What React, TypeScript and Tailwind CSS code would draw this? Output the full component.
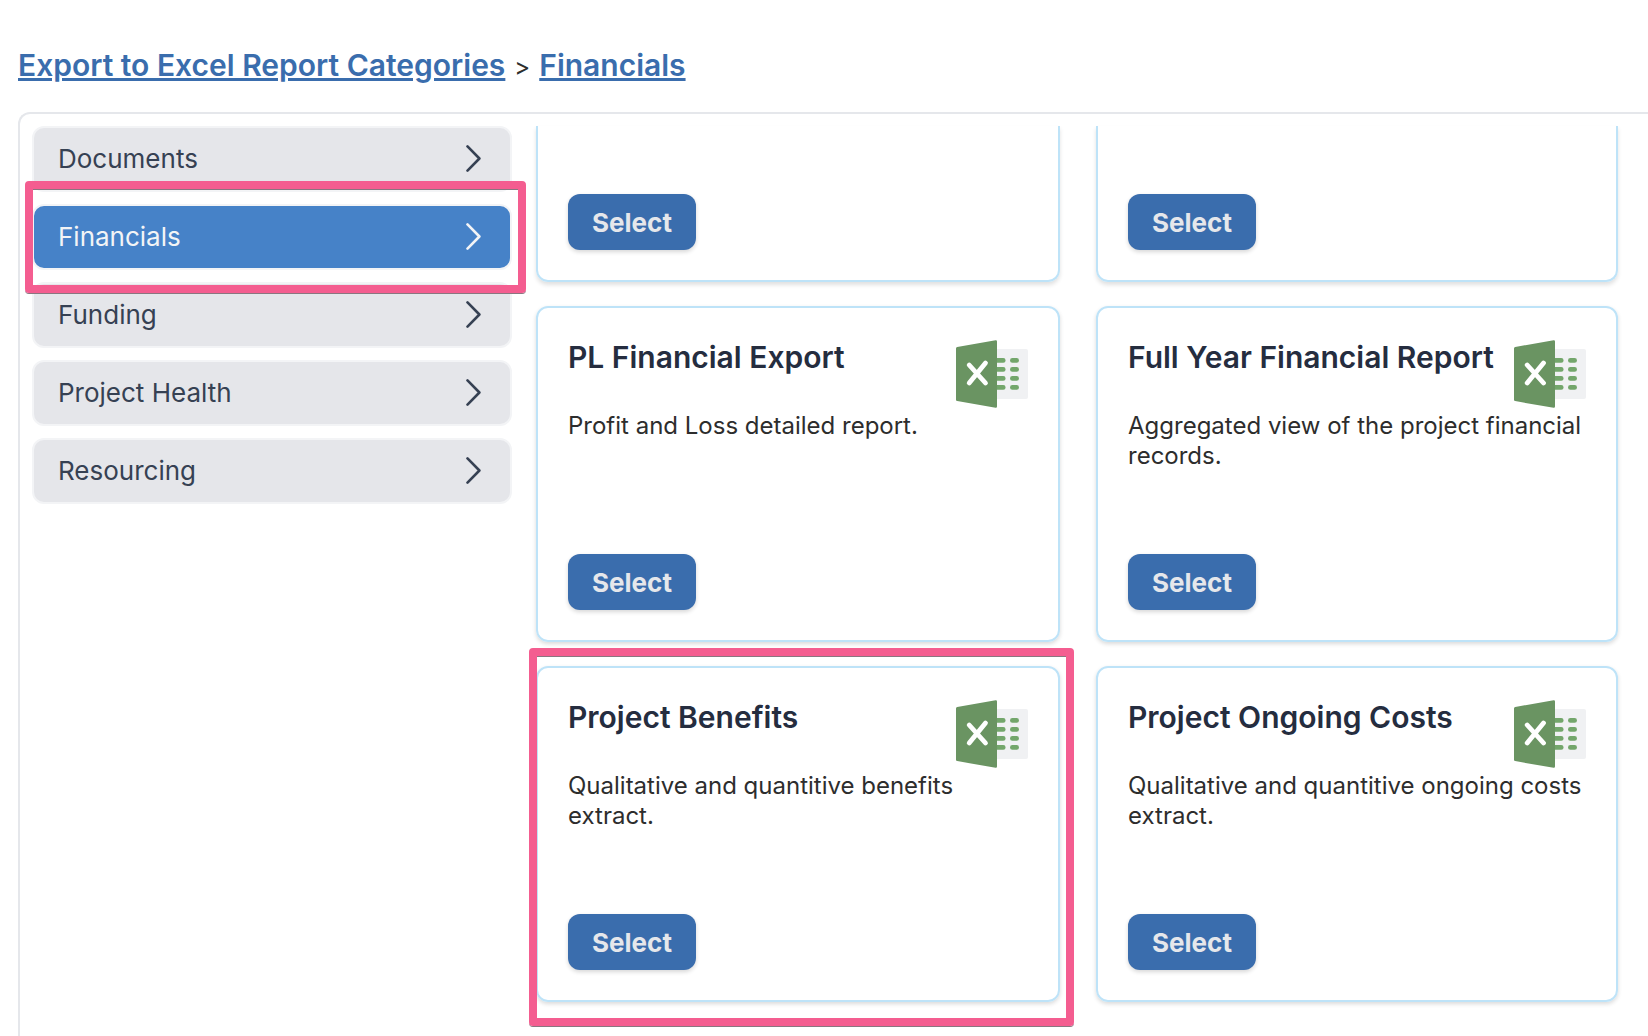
const categories = ['Documents', 'Financials', 'Funding', 'Project Health', 'Resourcing'];

const reports = [
  { title: 'PL Financial Export', text: 'Profit and Loss detailed report.' },
  { title: 'Full Year Financial Report', text: 'Aggregated view of the project financial records.' },
  { title: 'Project Benefits', text: 'Qualitative and quantitive benefits extract.', highlighted: true },
  { title: 'Project Ongoing Costs', text: 'Qualitative and quantitive ongoing costs extract.' },
];

function Chevron() {
  return (
    <svg className="h-7 w-4" viewBox="0 0 16 28" fill="none" stroke="currentColor" strokeWidth="2.6" strokeLinecap="round" strokeLinejoin="round" aria-hidden="true">
      <path d="M1.5 1.4 13.4 13.5 1.5 25.6" />
    </svg>
  );
}

function ExcelIcon() {
  return (
    <svg className="h-[68px] w-[72px] shrink-0" viewBox="0 0 72 68" aria-hidden="true">
      <rect x="38" y="9" width="34" height="50" rx="2" fill="#f0f1f3" />
      <g stroke="#73a66b" strokeWidth="4.8" strokeLinecap="round">
        {[20.4, 29.4, 38.4, 47.4].map((y) => (
          <path key={y} d={`M38 ${y}H47.2M56.4 ${y}H60.6`} />
        ))}
      </g>
      <path d="M1.2 7 39.6.2Q41 0 41 1.5V66.5Q41 68 39.6 67.8L1.2 61.1Q0 60.9 0 59.7V8.4Q0 7.2 1.2 7Z" fill="#6a9462" />
      <path d="M13.2 25 29.5 43M29.5 23 13.2 43" stroke="#fff" strokeWidth="4.8" strokeLinecap="round" />
    </svg>
  );
}

function Highlight({ className }: { className: string }) {
  return (
    <span
      aria-hidden="true"
      className={`pointer-events-none absolute z-10 rounded-[4px] border-8 border-[#f45d90] shadow-[0_1px_0_#8a7680,inset_0_1px_0_#8a7680] ${className}`}
    />
  );
}

function SelectButton() {
  return (
    <button type="button" className="mt-auto h-14 w-32 rounded-xl bg-[#3a6dad] pt-0.5 text-[26px] leading-8 font-bold text-gray-200 shadow-[0_2px_4px_rgba(0,0,0,0.16)]">
      Select
    </button>
  );
}

export default function App() {
  return (
    <div className="flex min-h-screen flex-col bg-white pt-[45px] pl-[18px] font-['Inter',sans-serif] text-[#2d2d2d]">
      <nav aria-label="Breadcrumb" className="mb-[27px] flex h-10 items-center gap-[9px] text-[30px] leading-10 font-semibold text-[#3a6dad]">
        <a href="#categories" className="underline">Export to Excel Report Categories</a>
        <span className="pt-1 text-2xl font-normal text-[#2d2d2d]">&gt;</span>
        <a href="#financials" className="underline">Financials</a>
      </nav>

      <main className="flex flex-1 gap-6 rounded-tl-xl border-t-2 border-l-2 border-gray-200 pt-3 pr-[30px] pl-3">
        <nav aria-label="Report categories" className="flex w-[480px] shrink-0 flex-col gap-3">
          {categories.map((name) => {
            const active = name === 'Financials';
            return (
              <div key={name} className="relative">
                <button
                  type="button"
                  className={`flex h-[66px] w-full items-center justify-between rounded-xl border-2 border-gray-100 pr-7 pl-6 text-[26px] leading-8 ${
                    active ? 'bg-[#4682c8] text-gray-100' : 'bg-[#e5e6ea] text-gray-700'
                  }`}
                >
                  {name}
                  <Chevron />
                </button>
                {active && <Highlight className="-top-[23px] -right-[14px] -bottom-[23px] -left-[7px]" />}
              </div>
            );
          })}
        </nav>

        <section aria-label="Reports" className="grid flex-1 grid-cols-[524fr_522fr] content-start gap-x-9 gap-y-6">
          {['left', 'right'].map((side) => (
            <article key={side} className="flex h-[156px] flex-col rounded-b-xl border-2 border-t-0 border-[#bee3f8] p-[30px] shadow-[0_3px_4px_rgba(0,0,0,0.12)]">
              <SelectButton />
            </article>
          ))}
          {reports.map((report) => (
            <article key={report.title} className="relative flex h-[336px] flex-col rounded-xl border-2 border-[#bee3f8] p-[30px] pt-8 shadow-[0_2px_4px_rgba(0,0,0,0.15)]">
              <div className="flex h-[68px] items-start justify-between">
                <h2 className="text-[30px] leading-[34px] font-semibold whitespace-nowrap text-[#252d3f]">{report.title}</h2>
                <ExcelIcon />
              </div>
              <p className="mt-[3px] text-2xl leading-[30px]">{report.text}</p>
              <SelectButton />
              {report.highlighted && <Highlight className="-top-5 -right-4 -bottom-[26px] -left-[9px]" />}
            </article>
          ))}
        </section>
      </main>
    </div>
  );
}
